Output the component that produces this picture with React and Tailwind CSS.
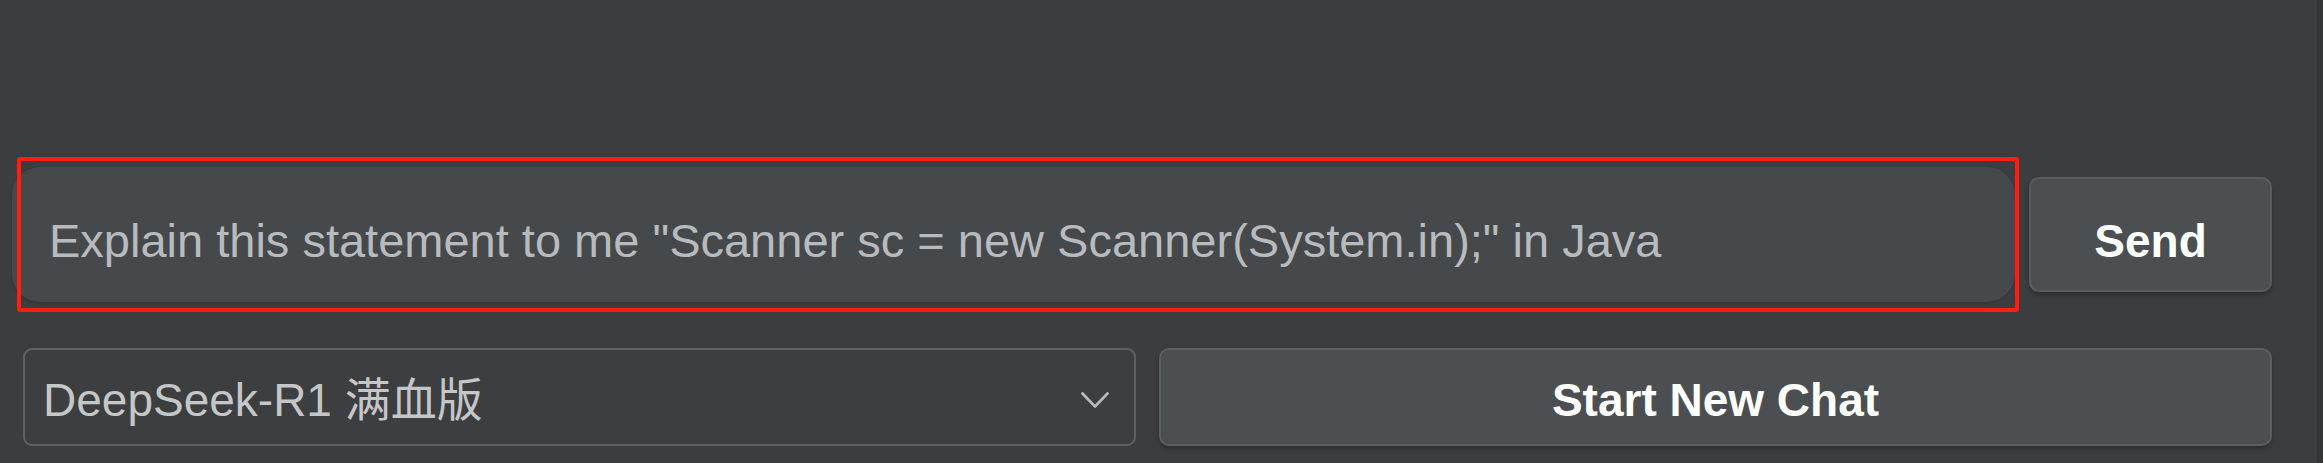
import React from "react";

const ChevronIcon = () => (
  <svg width="28" height="17" viewBox="0 0 28 17" fill="none">
    <polyline
      points="1.5,1.5 14,14.5 26.5,1.5"
      stroke="#b9bcbe"
      strokeWidth="2.6"
      strokeLinecap="round"
      strokeLinejoin="round"
    />
  </svg>
);

export default function App() {
  return (
    <div className="flex h-[463px] w-full bg-[#3c3d3f] font-['Liberation_Sans','Noto_Sans_CJK_SC',sans-serif]">
      <div className="flex flex-1 flex-col pt-[157px] pr-[45px]">
        {/* Message input row */}
        <div className="relative flex h-[155px] items-center gap-[14px] pl-[12px]">
          <div className="flex h-[135px] flex-1 items-center rounded-[28px] bg-[#46494b] pt-[12px] pl-[37px] shadow-[0_1px_3px_rgba(0,0,0,0.2)]">
            <span className="text-[47px] leading-none text-[#b8bbbd]">
              Explain this statement to me "Scanner sc = new Scanner(System.in);" in Java
            </span>
          </div>
          <button className="flex h-[115px] w-[243px] items-center justify-center rounded-[10px] border-2 border-[#5a5d60] bg-[#4c4f52] pt-[12px] text-[46px] leading-none font-bold text-white shadow-[0_3px_4px_rgba(0,0,0,0.25)]">
            Send
          </button>
          {/* highlight box */}
          <div className="pointer-events-none absolute top-0 left-[17px] h-[155px] w-[2002px] rounded-[3px] border-4 border-[#ff1e14]" />
        </div>

        {/* Model select + new chat */}
        <div className="mt-[36px] grid h-[98px] grid-cols-2 gap-[23px] pl-[23px]">
          <div className="flex items-center justify-between rounded-[9px] border-2 border-[#5e6163] bg-[#3d3e40] pt-[6px] pr-[25px] pl-[18px]">
            <span className="text-[46px] leading-none text-[#c4c6c8]">DeepSeek-R1 满血版</span>
            <ChevronIcon />
          </div>
          <button className="flex items-center justify-center rounded-[10px] border-2 border-[#5c5f62] bg-[#4c4f52] pt-[6px] text-[46px] leading-none font-bold text-white shadow-[0_3px_4px_rgba(0,0,0,0.25)]">
            Start New Chat
          </button>
        </div>
      </div>
      {/* scroll strip */}
      <div className="w-[6px] bg-[#343537]" />
    </div>
  );
}
